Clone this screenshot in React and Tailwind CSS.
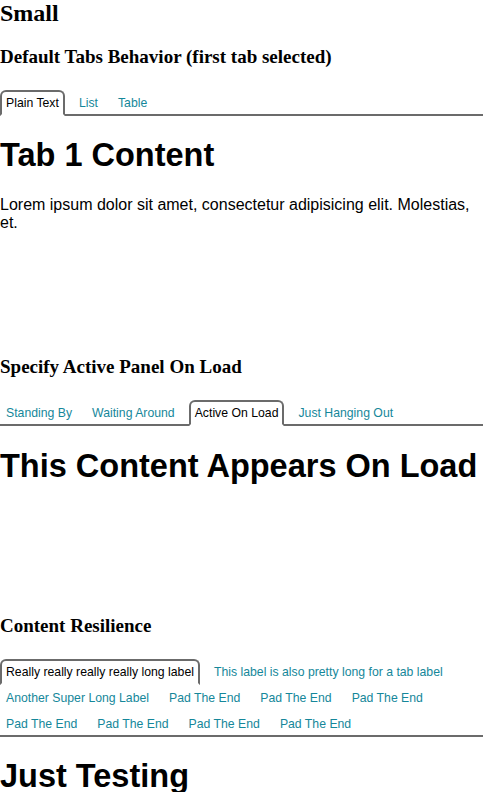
import React, { useState } from "react";

const TabGroup = ({ title, tabs, initial = 0, children }) => {
  const [active, setActive] = useState(initial);

  return (
    <section className="pb-[90px]">
      <h3 className="mt-[18.72px] font-['Liberation_Serif','Times_New_Roman',serif] text-[19px] font-bold leading-[normal]">
        {title}
      </h3>
      <div
        role="tablist"
        className="mt-[22px] flex flex-wrap gap-x-2 gap-y-[2px] border-b-2 border-[#6b6b6b]"
      >
        {tabs.map((label, idx) => (
          <button
            key={idx}
            role="tab"
            onClick={() => setActive(idx)}
            className={`-mb-[2px] rounded-t-[6px] border-2 px-1 py-1 text-[12.25px] leading-[14px] ${
              idx === active
                ? "border-[#6b6b6b] border-b-white bg-white text-black"
                : "border-transparent text-[#15879a]"
            }`}
          >
            {label}
          </button>
        ))}
      </div>
      <div role="tabpanel">{children(active)}</div>
    </section>
  );
};

const Heading = ({ children }) => (
  <h1 className="my-[21.44px] text-[32.5px] font-bold leading-[normal]">{children}</h1>
);

export default function App() {
  return (
    <div className="min-h-screen bg-white font-['Liberation_Sans',Arial,sans-serif] text-black">
      <h2 className="font-['Liberation_Serif','Times_New_Roman',serif] text-[24px] font-bold leading-[normal]">
        Small
      </h2>

      <TabGroup
        title="Default Tabs Behavior (first tab selected)"
        tabs={["Plain Text", "List", "Table"]}
      >
        {(active) =>
          active === 0 ? (
            <>
              <Heading>Tab 1 Content</Heading>
              <p className="my-4 text-[16px] leading-[normal]">
                Lorem ipsum dolor sit amet, consectetur adipisicing elit. Molestias,
                et.
              </p>
            </>
          ) : active === 1 ? (
            <Heading>Tab 2 Content</Heading>
          ) : (
            <Heading>Tab 3 Content</Heading>
          )
        }
      </TabGroup>

      <TabGroup
        title="Specify Active Panel On Load"
        tabs={["Standing By", "Waiting Around", "Active On Load", "Just Hanging Out"]}
        initial={2}
      >
        {(active) =>
          active === 2 ? (
            <Heading>This Content Appears On Load</Heading>
          ) : (
            <Heading>Nothing To See Here</Heading>
          )
        }
      </TabGroup>

      <TabGroup
        title="Content Resilience"
        tabs={[
          "Really really really really long label",
          "This label is also pretty long for a tab label",
          "Another Super Long Label",
          "Pad The End",
          "Pad The End",
          "Pad The End",
          "Pad The End",
          "Pad The End",
          "Pad The End",
          "Pad The End",
        ]}
      >
        {() => <Heading>Just Testing</Heading>}
      </TabGroup>
    </div>
  );
}
